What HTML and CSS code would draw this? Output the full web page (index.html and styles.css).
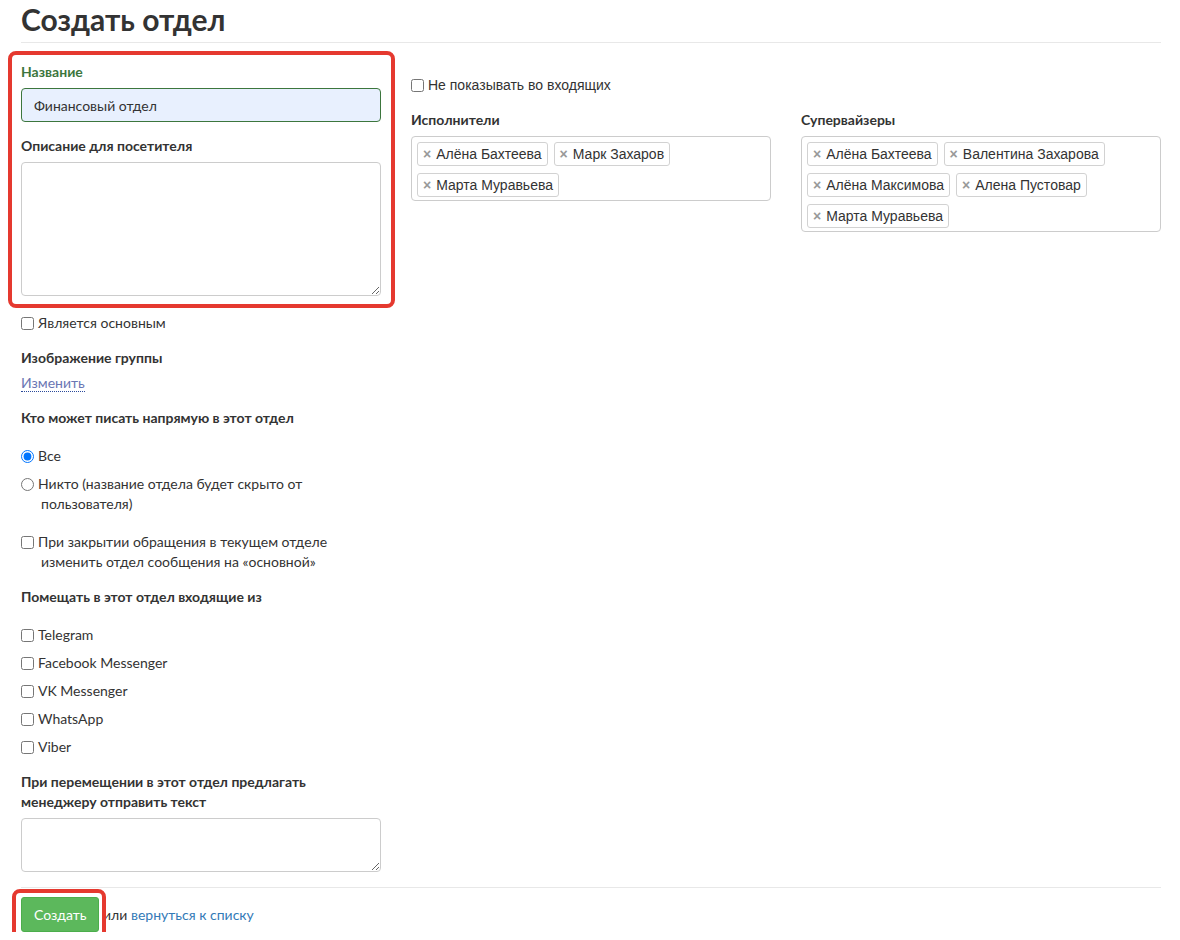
FILE: index.html
```html
<!DOCTYPE html>
<html lang="ru">
<head>
    <meta charset="UTF-8">
    <title>Создать отдел</title>
    <link rel="stylesheet" href="styles.css">
</head>
<body>
<div class="page">
    <h1 class="title">Создать отдел</h1>
    <hr class="divider">

    <form class="dept-form">
        <div class="row">
            <div class="col">
                <div class="highlight">
                    <p class="label label-ok">Название</p>
                    <input type="text" class="input input-ok" value="Финансовый отдел">
                    <p class="label label-gap">Описание для посетителя</p>
                    <textarea class="textarea textarea-big"></textarea>
                </div>

                <label class="check first-check"><input type="checkbox">Является основным</label>

                <p class="label section label-link">Изображение группы</p>
                <p class="link-line"><a href="#" class="dotted-link">Изменить</a></p>

                <p class="label section">Кто может писать напрямую в этот отдел</p>
                <label class="check option-first"><input type="radio" name="who" checked>Все</label>
                <label class="check option"><input type="radio" name="who">Никто (название отдела будет скрыто от пользователя)</label>

                <label class="check option-first"><input type="checkbox">При закрытии обращения в текущем отделе изменить отдел сообщения на «основной»</label>

                <p class="label section">Помещать в этот отдел входящие из</p>
                <label class="check option-first"><input type="checkbox">Telegram</label>
                <label class="check option"><input type="checkbox">Facebook Messenger</label>
                <label class="check option"><input type="checkbox">VK Messenger</label>
                <label class="check option"><input type="checkbox">WhatsApp</label>
                <label class="check option"><input type="checkbox">Viber</label>

                <p class="label section">При перемещении в этот отдел предлагать менеджеру отправить текст</p>
                <textarea class="textarea textarea-small"></textarea>
            </div>

            <div class="col col-middle">
                <label class="check arial"><input type="checkbox">Не показывать во входящих</label>
                <p class="label section">Исполнители</p>
                <div class="tags">
                    <span class="tag"><span class="tag-x">×</span>Алёна Бахтеева</span>
                    <span class="tag"><span class="tag-x">×</span>Марк Захаров</span>
                    <span class="tag"><span class="tag-x">×</span>Марта Муравьева</span>
                </div>
            </div>

            <div class="col col-right">
                <p class="label">Супервайзеры</p>
                <div class="tags">
                    <span class="tag"><span class="tag-x">×</span>Алёна Бахтеева</span>
                    <span class="tag"><span class="tag-x">×</span>Валентина Захарова</span>
                    <span class="tag"><span class="tag-x">×</span>Алёна Максимова</span>
                    <span class="tag"><span class="tag-x">×</span>Алена Пустовар</span>
                    <span class="tag"><span class="tag-x">×</span>Марта Муравьева</span>
                </div>
            </div>
        </div>

        <hr class="divider bottom-divider">

        <div class="actions">
            <span class="btn-frame"><button type="button" class="btn-create">Создать</button></span>
            или <a href="#" class="back-link">вернуться к списку</a>
        </div>
    </form>
</div>
</body>
</html>
```

FILE: styles.css
```css
body {
    margin: 0;
    background-color: white;
    color: #333;
    font-family: Lato, "Open Sans", sans-serif;
    font-size: 14px;
    line-height: 20px;
}

.page {
    width: 1140px;
    padding-left: 21px;
}

.title {
    margin: 2px 0 0;
    font-size: 30px;
    line-height: 34px;
    font-weight: bold;
    color: #333;
}

.divider {
    margin: 6px 0 0;
    border: none;
    border-top: 1px solid #e8e8e8;
}

.row {
    display: flex;
    gap: 30px;
    margin-top: 19px;
}

.col {
    width: 360px;
}

.col-middle {
    padding-top: 13px;
}

.col-right {
    padding-top: 48px;
}

.highlight {
    position: relative;
}

/* красная рамка-пометка поверх блока */
.highlight::after {
    content: '';
    position: absolute;
    top: -11px;
    left: -13px;
    right: -14px;
    bottom: -12px;
    border: 4px solid #e5392f;
    border-radius: 8px;
}

.label {
    margin: 0 0 6px;
    font-weight: bold;
}

.label-ok {
    color: #3c763d;
}

.label-gap {
    margin-top: 14px;
}

.section {
    margin-top: 15px;
}

.label-link {
    margin-bottom: 5px;
}

.input, .textarea {
    display: block;
    box-sizing: border-box;
    width: 360px;
    border: 1px solid #ccc;
    border-radius: 4px;
    font-family: inherit;
    font-size: 14px;
    color: #333;
}

.input {
    height: 34px;
    padding: 6px 12px;
}

.input-ok {
    background-color: #e8f0fe;
    border-color: #3c763d;
}

.textarea-big {
    height: 134px;
}

.textarea-small {
    height: 54px;
}

.check {
    display: block;
    padding-left: 20px;
    text-indent: -20px;
}

.check input {
    width: 13px;
    height: 13px;
    margin: 0 4px 0 0;
    vertical-align: -2px;
}

.first-check {
    margin-top: 17px;
}

.option-first {
    margin-top: 18px;
}

.option {
    margin-top: 8px;
}

.arial {
    font-family: "Liberation Sans", Arial, sans-serif;
}

.link-line {
    margin: 0;
}

.dotted-link {
    color: #6a76b3;
    text-decoration: none;
    border-bottom: 1px dotted #2b4a9b;
}

.tags {
    display: flex;
    flex-wrap: wrap;
    gap: 7px 6px;
    padding: 5px 5px 3px;
    border: 1px solid #ccc;
    border-radius: 4px;
    font-family: "Liberation Sans", Arial, sans-serif;
}

.tag {
    display: inline-block;
    height: 24px;
    line-height: 22px;
    box-sizing: border-box;
    padding: 0 5px;
    border: 1px solid #d2d2d2;
    border-radius: 3px;
    color: #333;
}

.tag-x {
    color: #999;
    font-weight: bold;
    margin-right: 5px;
}

.bottom-divider {
    margin-top: 15px;
}

.actions {
    margin-top: 9px;
}

.btn-frame {
    position: relative;
    display: inline-block;
}

.btn-frame::after {
    content: '';
    position: absolute;
    top: -8px;
    left: -9px;
    right: -7px;
    bottom: -8px;
    border: 4px solid #e5392f;
    border-radius: 8px;
}

.btn-create {
    height: 35px;
    padding: 6px 12px;
    background-color: #5cb85c;
    border: 1px solid #4cae4c;
    border-radius: 3px;
    color: white;
    font-family: inherit;
    font-size: 14px;
}

.back-link {
    color: #337ab7;
    text-decoration: none;
}
```
